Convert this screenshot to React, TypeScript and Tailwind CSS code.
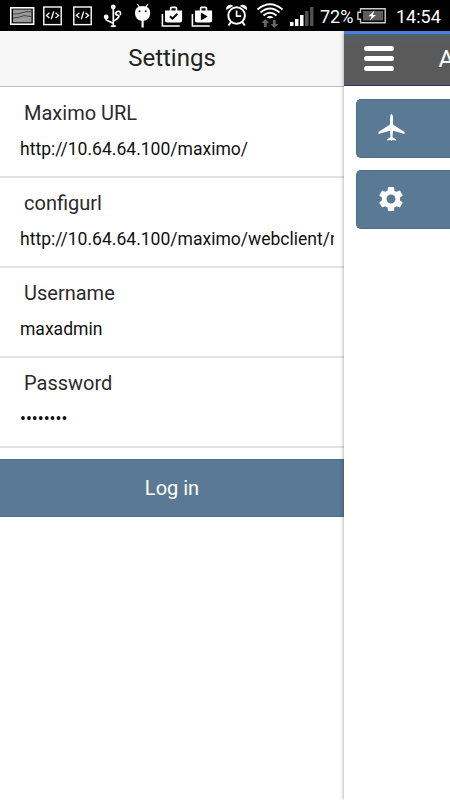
import type { ReactNode } from 'react'
import { MdSettings } from 'react-icons/md'

type Field = { label: string; value: string }

const fields: Field[] = [
  { label: 'Maximo URL', value: 'http://10.64.64.100/maximo/' },
  { label: 'configurl', value: 'http://10.64.64.100/maximo/webclient/mobile' },
  { label: 'Username', value: 'maxadmin' },
  { label: 'Password', value: '••••••••' },
]

// Every glyph is a slice of the status bar, drawn in the bar's own coordinates
function Glyph({ x, w, children }: { x: number; w: number; children: ReactNode }) {
  return (
    <svg width={w} height={31} viewBox={`${x} 0 ${w} 31`} fill="#fff" className="shrink-0">
      {children}
    </svg>
  )
}

function CodeGlyph({ x }: { x: number }) {
  return (
    <Glyph x={x} w={30}>
      <g transform={`translate(${x + 5} 0)`} fill="none" stroke="#fff">
        <rect x="0.8" y="7" width="17.4" height="17.6" strokeWidth="1.4" />
        <path d="M6.4 12.8 3.4 15.4l3 2.6M12.6 12.8l3 2.6-3 2.6M10.7 11.5l-2.4 7.8" strokeWidth="1.3" />
      </g>
    </Glyph>
  )
}

function BagGlyph({ x, children }: { x: number; children: ReactNode }) {
  return (
    <Glyph x={x} w={30}>
      <g transform={`translate(${x + 0.5} 0)`}>
        <path d="M3.9 14v12h17.3" fill="none" stroke="#fff" strokeWidth="1.6" />
        <path
          fillRule="evenodd"
          d="M6.5 10.6h4.8V8.2q0-1.7 1.7-1.7h4.1q1.7 0 1.7 1.7v2.4h4.8v10q0 1.9-1.9 1.9H8.4q-1.9 0-1.9-1.9zM13 10.6h4.1V8.3H13z"
        />
        {children}
      </g>
    </Glyph>
  )
}

function StatusBar() {
  return (
    <div className="flex h-[31px] shrink-0 items-center bg-black text-[18px] text-white">
      <Glyph x={0} w={38}>
        <rect x="10.8" y="7.8" width="22.8" height="16.4" fill="#000" stroke="#fff" strokeWidth="1.6" />
        <path d="M13 9.5h18.5v12.8H13z" fill="#999" />
        <path d="M13 14q6 .2 9-1.2t9.5-1.2M13 18q7-.5 11-2.4l7.5 1" fill="none" stroke="#444" />
      </Glyph>
      <CodeGlyph x={38} />
      <CodeGlyph x={68} />
      <Glyph x={98} w={32}>
        <path
          d="M113.3 6v20M106 17v1.6q0 1.4 1.2 2l6 2.6M119.3 15.5q-1 3.5-6 5.5M115.5 12.5q0 3 3.8 3"
          fill="none"
          stroke="#fff"
          strokeWidth="1.7"
        />
        <circle cx="113.3" cy="7" r="2.4" />
        <circle cx="106.2" cy="17" r="2.4" />
        <path d="M115.7 13.500q.5-2.500 3-2.300 2.600.4 1.500 4" fill="none" stroke="#fff" strokeWidth="1.6" />
        <path d="M110.8 25.3h5v1.8h-5z" />
      </Glyph>
      <Glyph x={130} w={28}>
        <path d="m137.5 4 2 3.5M147.8 4l-2 3.5" stroke="#fff" strokeWidth="1.2" />
        <path d="M135 13q0-7 7.6-7t7.6 7q0 7-7.6 8-7.6-1-7.6-8" />
        <path d="M141.5 20h2.2v7.5h-2.2z" />
        <circle cx="139.5" cy="11.3" r="1" fill="#000" />
        <circle cx="145.7" cy="11.3" r="1" fill="#000" />
      </Glyph>
      <BagGlyph x={158}>
        <path d="m11.5 16.2 2.5 2.5 5-5" fill="none" stroke="#000" strokeWidth="2" />
      </BagGlyph>
      <BagGlyph x={188}>
        <path d="m12.4 12.4 6.8 4-6.8 4z" fill="#000" />
      </BagGlyph>
      <Glyph x={218} w={36}>
        <g fill="none" stroke="#fff">
          <circle cx="236.6" cy="15.5" r="8.3" strokeWidth="2" />
          <path d="M236.6 10.5v5.6h4.5" strokeWidth="1.7" />
          <path d="m231 22-2.5 3.5M242.3 22l2.5 3.5" strokeWidth="2" />
        </g>
        <path d="M226.3 10q-.8-4 2.8-5 2.3-.7 4.2 1zM246.9 10q.8-4-2.8-5-2.3-.7-4.2 1z" />
      </Glyph>
      <Glyph x={254} w={32}>
        <g fill="none" stroke="#fff" strokeWidth="1.9">
          <path d="M257.5 9.5q12.5-10.500 25 0M260.5 12.500q9.500-8 19 0M263.500 15.500q6.500-5.500 13 0" />
        </g>
        <path d="M266.5 17.5q3.500-2.800 7 0l-3.500 1z" />
        <path
          d="m265.300 19-3.800 4h2.400v4h2.800v-4h2.400zM274.300 28l3.800-4h-2.400v-4h-2.800v4h-2.400z"
          fill="#666"
        />
      </Glyph>
      <Glyph x={286} w={34}>
        <path d="M290 22h3.5v4H290zM295 19h3.5v7H295zM300 15h3.5v11H300z" />
        <path d="M305 11h3.5v15H305zM310 7h3.5v19H310z" fill="#505050" />
      </Glyph>
      <span className="w-[35px] whitespace-nowrap pt-px">72%</span>
      <Glyph x={355} w={41}>
        <path d="M360.5 8.7h24.7v14h-24.7v-3.5h-2.6v-7h2.6z" fill="none" stroke="#ccc" strokeWidth="1.4" />
        <path d="M363 11h20v9.5h-20z" fill="#5d5d5d" />
        <path d="m374.5 10.5-6 5.8h3.2l-2 4.5 6.3-5.8h-3.2z" />
      </Glyph>
      <span className="whitespace-nowrap pt-px">14:54</span>
    </div>
  )
}

function SettingsPanel() {
  return (
    <section className="flex w-[344px] shrink-0 flex-col bg-white">
      <h1 className="h-[56px] border-b border-[#bbb] bg-[#f7f7f7] text-center text-[24px] leading-[55px] text-[#222]">
        Settings
      </h1>
      <form className="pt-px">
        {fields.map((field) => (
          <label
            key={field.label}
            className="block h-[90px] overflow-hidden border-b-2 border-[#e2e2e2] pl-5 pr-[10px] pt-[11px]"
          >
            <span className="block pl-1 text-[20px] leading-7 text-[#2a2a2a]">{field.label}</span>
            <span className="mt-2 block overflow-hidden whitespace-nowrap text-[17.55px] leading-7 text-[#111]">
              {field.value}
            </span>
          </label>
        ))}
        <button
          type="button"
          className="mt-[11px] block h-[58px] w-full border-y border-[#4f6f8c] bg-[#5a7995] text-[20px] text-white"
        >
          Log in
        </button>
      </form>
    </section>
  )
}

function Tile({ children }: { children: ReactNode }) {
  return (
    <div className="flex h-[59px] items-center rounded-l-[5px] border border-r-0 border-[#4b6f8d] bg-[#5a7995] pb-0.5 pl-5 text-white">
      {children}
    </div>
  )
}

// Main page, pushed to the right while the settings menu is open
function MainPage() {
  return (
    <main className="min-w-0 flex-1 overflow-hidden bg-white shadow-[0_0_4px_rgba(0,0,0,0.4)]">
      <header className="flex h-[55px] items-center border-b border-t-3 border-b-[#392d69] border-t-[#4a80dc] bg-linear-to-b from-[#52606f] via-[#5a5a5a] via-20% to-[#5a5a5a] pb-0.5 pl-[19.5px] text-white">
        <div className="flex w-[30px] shrink-0 flex-col gap-[5px]">
          <span className="h-[5px] rounded-full bg-white" />
          <span className="h-[5px] rounded-full bg-white" />
          <span className="h-[5px] rounded-full bg-white" />
        </div>
        <span className="ml-[45px] whitespace-nowrap text-[24px]">Anywhere</span>
      </header>
      <nav className="flex flex-col gap-3 pl-3 pt-[13px]">
        <Tile>
          <svg width="28" height="30" viewBox="0 0 28 30" fill="currentColor">
            <path d="M14.5 .5q1.500 1.500 1.500 4v7l11.500 7.500v2l-11.500-3.200-.5 6.200 3.600 2.400v1.200l-3.800-.6-.8 1-.8-1-3.800.6v-1.200l3.600-2.400-.5-6.200L1.500 21v-2l11.500-7.500v-7q0-2.500 1.500-4" />
          </svg>
        </Tile>
        <Tile>
          <MdSettings size={30} className="-ml-px" />
        </Tile>
      </nav>
    </main>
  )
}

export default function App() {
  return (
    <div className="flex h-[800px] w-[450px] flex-col overflow-hidden bg-white font-[Roboto,sans-serif]">
      <StatusBar />
      <div className="flex min-h-0 flex-1">
        <SettingsPanel />
        <MainPage />
      </div>
    </div>
  )
}
